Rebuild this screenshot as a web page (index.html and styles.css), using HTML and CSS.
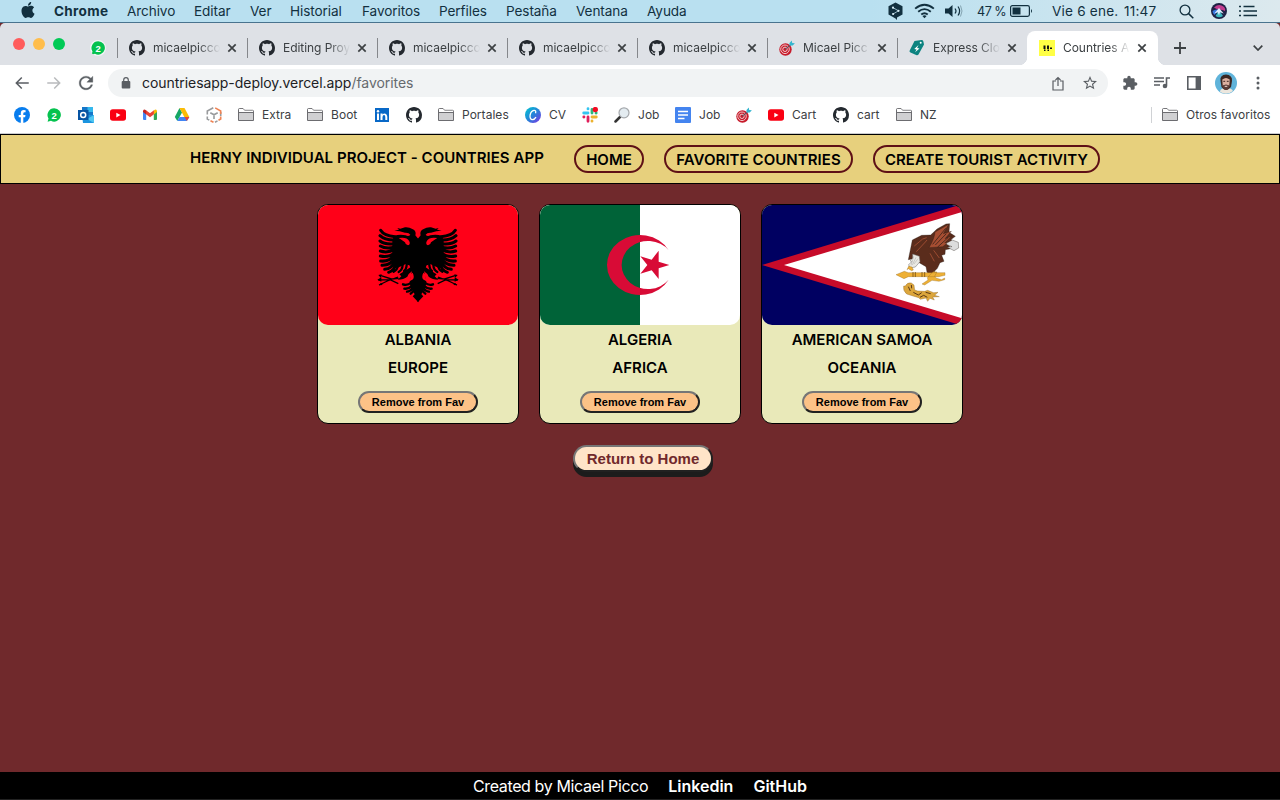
FILE: index.html
```html
<!DOCTYPE html>
<html lang="es">
<head>
<meta charset="utf-8">
<title>Countries App</title>
<link rel="stylesheet" href="styles.css">
</head>
<body>
<svg class="defs" width="0" height="0" aria-hidden="true">
  <symbol id="github" viewBox="0 0 16 16"><path fill="#24292f" d="M8 0C3.58 0 0 3.58 0 8c0 3.54 2.29 6.53 5.47 7.59.4.07.55-.17.55-.38 0-.19-.01-.82-.01-1.49-2.01.37-2.53-.49-2.69-.94-.09-.23-.48-.94-.82-1.13-.28-.15-.68-.52-.01-.53.63-.01 1.08.58 1.23.82.72 1.21 1.87.87 2.33.66.07-.52.28-.87.51-1.07-1.78-.2-3.64-.89-3.64-3.95 0-.87.31-1.59.82-2.15-.08-.2-.36-1.02.08-2.12 0 0 .67-.21 2.2.82.64-.18 1.32-.27 2-.27s1.36.09 2 .27c1.53-1.04 2.2-.82 2.2-.82.44 1.1.16 1.92.08 2.12.51.56.82 1.27.82 2.15 0 3.07-1.87 3.75-3.65 3.95.29.25.54.73.54 1.48 0 1.07-.01 1.93-.01 2.2 0 .21.15.46.55.38A8.01 8.01 0 0 0 16 8c0-4.42-3.58-8-8-8z"/></symbol>
  <symbol id="close" viewBox="0 0 10 10"><path d="M1.3 1.3l7.4 7.4M8.700 1.300L1.300 8.700" stroke="#3c4043" stroke-width="1.7"/></symbol>
  <symbol id="whatsapp" viewBox="0 0 16 16"><path fill="#05c24f" d="M8.200 1.200a6.700 6.700 0 1 1-3.200 12.600L1.600 14.700l.9-3.300A6.700 6.700 0 0 1 8.200 1.200z"/><text x="8.200" y="11.600" class="badge-number">2</text></symbol>
  <symbol id="folder" viewBox="0 0 16 16"><path fill="#d0d0d2" stroke="#6c6c70" d="M.5 13.500v-11q0-.9.900-.9h3.700l1.500 1.700h8q.9 0 .9.900v9.300z"/><path fill="#fff" d="M1 5V2.100h3.900l1.500 1.700H15V5z"/><path stroke="#6c6c70" d="M1 5.500h14"/></symbol>
  <symbol id="youtube" viewBox="0 0 16 16"><rect y="2.300" width="16" height="11.500" rx="2.800" fill="#fa0012"/><path d="M6.300 5.700v4.700l4.200-2.350z" fill="#fff"/></symbol>
  <symbol id="dart" viewBox="0 0 16 16"><circle cx="6.500" cy="9.500" r="6.200" fill="#c71b2b"/><circle cx="6" cy="9.300" r="4.300" fill="none" stroke="#f2d7d7" stroke-width=".9"/><circle cx="6" cy="9.300" r="2.200" fill="none" stroke="#f6dddd" stroke-width=".9"/><path d="M6 9.300l6.500-5" stroke="#4b5968"/><path d="M10.500 5.400V2.900L12.800.5l.4 2.500 2.700.3-2.200 2.300z" fill="#35b6cf"/></symbol>
  <symbol id="eagle-half" viewBox="0 0 600 360" overflow="visible">
    <g transform="translate(-24 -30)">
      <path d="M325 132l-9-11q4-14-9-19-9-6-22-5l-14 4-9-2 5 5-14 3 16 2 16 4q12-1 16 6-5 7-14 2-19-4-35 2l-5 14v60l13 23 26-12 12 3 8 18-7 29q0 20 13 36l13 28z"/>
      <path d="M266 129q24-4 31 8 6 10-3 14-8-1-9-9l-13-9z" fill="#ff0018"/>
      <g fill="none" stroke="#000" stroke-width="9" stroke-linecap="round">
        <path d="M212 106q9 16 43 19M210 122q15 14 45 13M210 138q16 12 45 8M211 153q17 10 44 3M211 168q20 7 44-4M211 183q24 6 44-10M212 198q25 3 43-18M216 211q26 1 40-24M224 223q22-2 33-27M236 232q19-6 24-32"/>
        <path stroke-width="7" d="M251 230q12-6 13-20M266 231q11-6 12-21M282 228q7-4 8-18"/>
        <path stroke-width="7" d="M279 268q12 5 25-5M283 281q12 2 24-9M291 290q9 0 17-10M302 296l9-8"/>
      </g>
      <path d="M311 210q-20 14-43 28l6 6-11 10q18 0 29-9l4-8 17-14z"/>
      <path d="M266 250l-22 2-31-10m-8 13l35-1 25 12m-58 4l25-12 32-12" fill="none" stroke="#000" stroke-width="4"/>
      <path d="M202 254l12-7v13zM205 240l10-2-3 10zM207 271l11-1-5-7z"/>
      <path d="M308 233q-10 6-7 17l-14 12q12-1 22-9 5-8-1-20z" fill="#ff0018"/>
      <path d="M308 304l17-17v35z"/>
    </g>
  </symbol>
</svg>

<div class="menubar">
  <svg class="apple" viewBox="0 0 24 24"><path fill="#12303f" d="M12.152 6.896c-.948 0-2.415-1.078-3.960-1.040-2.040.027-3.910 1.183-4.961 3.014-2.117 3.675-.546 9.103 1.519 12.090 1.013 1.454 2.208 3.090 3.792 3.039 1.520-.065 2.090-.987 3.935-.987 1.831 0 2.350.987 3.960.948 1.637-.026 2.676-1.480 3.676-2.948 1.156-1.688 1.636-3.325 1.662-3.415-.039-.013-3.182-1.221-3.220-4.857-.026-3.040 2.480-4.494 2.597-4.559-1.429-2.090-3.623-2.324-4.390-2.376-2-.156-3.675 1.090-4.610 1.090zM15.530 3.830c.843-1.012 1.400-2.427 1.245-3.830-1.207.052-2.662.805-3.532 1.818-.78.896-1.454 2.338-1.273 3.714 1.338.104 2.715-.688 3.559-1.701"/></svg>
  <b>Chrome</b><span>Archivo</span><span>Editar</span><span>Ver</span><span>Historial</span><span>Favoritos</span><span>Perfiles</span><span>Pestaña</span><span>Ventana</span><span>Ayuda</span>
  <svg class="deepl" viewBox="0 0 16 18"><path fill="#12303f" d="M8 .5L15 4.300v8.300L9.500 15.600V18L8 16.500 1 12.600V4.300z"/><path d="M5.500 5.700l5.500 3.100-5.400 3.200" fill="none" stroke="#bfdfed" stroke-width=".8"/><g fill="#d9eff7"><circle cx="5.500" cy="5.700" r="1.100"/><circle cx="11" cy="8.800" r="1.100"/><circle cx="5.600" cy="12" r="1.100"/></g></svg>
  <svg class="wifi" viewBox="0 0 22 16"><g fill="none" stroke="#12303f" stroke-width="2"><path d="M1.200 5.500q9.800-8.200 19.600 0M4.400 8.700q6.600-5.300 13.200 0M7.600 11.700q3.400-2.700 6.800 0"/></g><path fill="#12303f" d="M8.800 13.300q2.200-1.600 4.400 0L11 15.600z"/></svg>
  <svg class="sound" viewBox="0 0 18 14"><path fill="#12303f" d="M0 4.500h3.500L7.500 1v12l-4-3.500H0z"/><path d="M10 4.500q2 2.500 0 5M13 2.500q3.200 4.500 0 9" fill="none" stroke="#12303f" stroke-width="1.200"/><path d="M15.500 1.500q3 5.500 0 11" fill="none" stroke="#83a3b0"/></svg>
  <span class="battery-text">47 %</span>
  <svg class="battery" viewBox="0 0 23 12"><rect x=".6" y=".6" width="18.800" height="10.800" rx="1.800" fill="none" stroke="#12303f" stroke-width="1.200"/><path fill="#12303f" d="M2.500 2.500h8v7h-8zM21 4q2 2 0 4z"/></svg>
  <span class="clock">Vie 6 ene.</span><span class="clock">11:47</span>
  <svg class="i15" viewBox="0 0 15 15"><circle cx="6" cy="6" r="4.900" fill="none" stroke="#12303f" stroke-width="1.300"/><path d="M9.600 9.600l4.700 4.700" stroke="#12303f" stroke-width="1.500"/></svg>
  <svg class="i16" viewBox="0 0 16 16"><circle cx="8" cy="8" r="8" fill="#1f2145"/><path d="M3 4.500q4-3.500 7.500-2 4.500 1.500 3.500 5.500-4-2-6.500-1z" fill="#c23c8f"/><path d="M1.500 8q3.500-2.500 6.500-1l-4.500 5Q1.500 10.500 1.500 8z" fill="#3676dd"/><path d="M8 7l4 6Q8 15.500 4.500 13z" fill="#3ab6bd"/><path d="M3.300 10.500l4.700-5.500 4.700 5.500-3.700-1.300-1 3.300-1.300-3.300z" fill="#dcecff"/></svg>
  <svg class="list" viewBox="0 0 18 12"><path d="M0 1.500h2M0 6h2M0 10.500h2M4.500 1.500h11M4.500 6h13.500M4.500 10.500H18" stroke="#12303f" stroke-width="1.700"/></svg>
</div>

<div class="tabstrip">
  <div class="window-controls"><i class="red"></i><i class="yellow"></i><i class="green"></i></div>
  <svg class="pinned"><use href="#whatsapp"/></svg>
  <div class="tab"><svg class="i16"><use href="#github"/></svg><span>micaelpicco</span><svg class="x"><use href="#close"/></svg></div>
  <div class="tab"><svg class="i16"><use href="#github"/></svg><span>Editing Proy</span><svg class="x"><use href="#close"/></svg></div>
  <div class="tab"><svg class="i16"><use href="#github"/></svg><span>micaelpicco</span><svg class="x"><use href="#close"/></svg></div>
  <div class="tab"><svg class="i16"><use href="#github"/></svg><span>micaelpicco</span><svg class="x"><use href="#close"/></svg></div>
  <div class="tab"><svg class="i16"><use href="#github"/></svg><span>micaelpicco</span><svg class="x"><use href="#close"/></svg></div>
  <div class="tab"><svg class="i16"><use href="#dart"/></svg><span>Micael Picc</span><svg class="x"><use href="#close"/></svg></div>
  <div class="tab"><svg class="i16" viewBox="0 0 16 16"><path fill="#0c8380" d="M5.500 1L12.500 0q1.500 0 1.800 1.200l.7 3.300-5.500 10q-.7 1-1.800.8L1.500 12.500Q0 12 .7 10.500z"/><circle cx="11.700" cy="2.800" r="1" fill="#fff"/><path fill="#fff" d="M9.500 5L5.300 8.900l2.300.7-1.600 2.600 4.500-3.600-2.400-.7z"/></svg><span>Express Clo</span><svg class="x"><use href="#close"/></svg></div>
  <div class="tab active"><svg class="i16" viewBox="0 0 16 16"><path fill="#ffff45" d="M0 0h16v16H0z"/><path fill="#111" d="M4.500 5.500h2V9h-2zM8 5.500h2V9H8zM5 9.500h1.500V11H5zM8.500 9.500H10V11H8.500zM11 7.500h2V9h-2z"/></svg><span>Countries A</span><svg class="x"><use href="#close"/></svg></div>
  <svg class="plus" viewBox="0 0 12 12"><path d="M6 0v12M0 6h12" stroke="#3c4043" stroke-width="1.800"/></svg>
  <svg class="chevron" viewBox="0 0 10 6"><path d="M.7.7L5 5 9.300.7" fill="none" stroke="#3c4043" stroke-width="1.700"/></svg>
</div>

<div class="toolbar">
  <svg class="tool" viewBox="0 0 24 24"><path fill="#5a5e63" d="M21 11H6.830l5.590-5.590L11 4l-8 8 8 8 1.410-1.410L6.830 13H21z"/></svg>
  <svg class="tool" viewBox="0 0 24 24"><path fill="#b9bbbd" d="M13 4l-1.410 1.410L17.170 11H3v2h14.170l-5.580 5.590L13 20l8-8z"/></svg>
  <svg class="tool" viewBox="0 0 24 24"><path fill="#5a5e63" stroke="#5a5e63" stroke-width=".4" d="M18.500 5.500C16.900 3.900 14.600 2.900 12 2.900c-5 0-9.100 4.100-9.100 9.100s4.100 9.100 9.100 9.100c4.200 0 7.800-2.900 8.800-6.800h-2.300c-.9 2.700-3.500 4.600-6.500 4.600-3.800 0-6.900-3.100-6.900-6.900S8.200 5.100 12 5.100c1.900 0 3.600.8 4.900 2l-3.800 3.800h8V2.900z"/></svg>
  <div class="omnibox">
    <svg class="lock" viewBox="0 0 10 12"><rect x=".7" y="4" width="8.600" height="7.500" rx="1" fill="#5a5e63"/><path d="M2.700 4.500V3a2.300 2.300 0 0 1 4.600 0v1.500" fill="none" stroke="#5a5e63" stroke-width="1.200"/></svg>
    <span class="url">countriesapp-deploy.vercel.app<em>/favorites</em></span>
    <svg class="share" viewBox="0 0 12 15"><path d="M4 5H1v9h10V5H8M6 10V1.500M3.500 4L6 1.500 8.500 4" fill="none" stroke="#5a5e63" stroke-width="1.200"/></svg>
    <svg class="star" viewBox="2 2 20 20"><path fill="#5a5e63" d="M22 9.240l-7.190-.62L12 2 9.190 8.630 2 9.240l5.460 4.730L5.820 21 12 17.270 18.180 21l-1.630-7.030L22 9.240zM12 15.400l-3.760 2.270 1-4.280-3.320-2.880 4.380-.38L12 6.100l1.710 4.040 4.380.38-3.320 2.880 1 4.280L12 15.400z"/></svg>
  </div>
  <svg class="ext" viewBox="0 0 24 24"><path fill="#5a5e63" d="M20.500 11H19V7c0-1.100-.9-2-2-2h-4V3.500C13 2.120 11.880 1 10.500 1S8 2.120 8 3.500V5H4c-1.100 0-1.990.9-1.990 2v3.800H3.500c1.490 0 2.700 1.210 2.700 2.700s-1.210 2.700-2.700 2.700H2V20c0 1.100.9 2 2 2h3.800v-1.500c0-1.490 1.210-2.700 2.700-2.700 1.490 0 2.700 1.210 2.700 2.700V22H17c1.100 0 2-.9 2-2v-4h1.500c1.380 0 2.500-1.120 2.500-2.500S21.880 11 20.500 11z"/></svg>
  <svg class="music" viewBox="0 0 16 14"><path d="M0 2h10M0 5.500h10M0 9h6" stroke="#5a5e63" stroke-width="1.400"/><path d="M16 2h-3.500v7.500" fill="none" stroke="#5a5e63" stroke-width="1.600"/><circle cx="11" cy="10" r="2.300" fill="#5a5e63"/></svg>
  <svg class="panel" viewBox="0 0 14 14"><path fill="#5a5e63" d="M0 0h14v14H0zM1.600 1.600v10.800h7V1.600z" fill-rule="evenodd"/></svg>
  <svg class="avatar" viewBox="0 0 22 22"><circle cx="11" cy="11" r="11" fill="#5fb3da"/><path fill="#ece6dd" d="M5 20q0-4 6-4 6 0 7 3-6 5-13 1z"/><path fill="#3b2723" d="M5.500 9q-1-6 5.500-6.500 6.500.5 6 6.500l-1 6q-5 6-9.500 0z"/><path fill="#dcb0a0" d="M7.300 7.500q3.700-3 7.400 0l-.4 6.500q-3.300 4-6.600 0z"/><path fill="#5c3c36" d="M7.300 12.500q1.200 1 2 .5 1.700-.8 3.400 0 .8.500 2-.5-.2 5.500-3.700 5.500t-3.700-5.500z"/><path d="M8.300 9.300h1.900m1.600 0h1.900" stroke="#38211d"/><path d="M9.700 14.300h2.600" stroke="#f3dcd5"/></svg>
  <svg class="dots" viewBox="0 0 4 14"><g fill="#5a5e63"><circle cx="2" cy="2" r="1.500"/><circle cx="2" cy="7" r="1.500"/><circle cx="2" cy="12" r="1.500"/></g></svg>
</div>

<div class="bookmarks">
  <div><svg class="i16" viewBox="0 0 16 16"><circle cx="8" cy="8" r="8" fill="#087dee"/><path fill="#fff" d="M6.800 16v-5.700H4.700V8h2.100V6.200Q6.800 3 9.800 3l1.800.2v2h-1Q9.300 5.200 9.300 6.600V8h2.200l-.4 2.300H9.300V16z"/></svg></div>
  <div><svg class="i16"><use href="#whatsapp"/></svg></div>
  <div><svg class="i16" viewBox="0 0 16 16"><path fill="#1577c9" d="M4 0h11v10H4z"/><path fill="#35b8ed" d="M9.500 0H15v5H9.500z"/><path fill="#1b94df" d="M4 8h12v8H5z"/><path fill="#50c7f1" d="M16 8v8L9 12z"/><path fill="#0754a3" d="M0 3h10.500v10H0z"/><circle cx="5.200" cy="8" r="2.500" fill="none" stroke="#fff" stroke-width="1.500"/></svg></div>
  <div><svg class="i16"><use href="#youtube"/></svg></div>
  <div><svg class="i16" viewBox="0 0 16 16"><path fill="#4285f4" d="M1 4l3.200 2.300V13H2q-1 0-1-1z"/><path fill="#34a853" d="M15 4l-3.200 2.300V13H14q1 0 1-1z"/><path fill="#ea4335" d="M4 3.300l4 3 4-3v4l-4 3-4-3z"/><path fill="#c5221f" d="M1 4.200Q1.300 1.500 4.200 3.400v4L1 5z"/><path fill="#fbbc04" d="M15 4.200q-.3-2.700-3.200-.8v4L15 5z"/></svg></div>
  <div><svg class="i16" viewBox="0 0 16 16"><path fill="#16a765" d="M5.500 1L8 5.500 3.300 14 .8 10z"/><path fill="#fbbc05" d="M5.500 1h5L15.300 10h-5z"/><path fill="#4285f4" d="M5.500 10h9.800l-2.500 4H3.300z"/><path fill="#ea4335" d="M10.500 10h4.800l-2.400 4z"/></svg></div>
  <div><svg class="i16" viewBox="0 0 16 16"><g fill="none" stroke-width="1.600"><path stroke="#999b9d" d="M7.300.8L1.300 4v3.500M1.300 9.500V12l2 1.100M14.700 9V5M9 15.200l2.500-1.300M4.300 5.800L8 7.800l3.700-2M8 7.800V12"/><path stroke="#ef8354" d="M9.200.9l5.500 3.100v3M14.700 9.500V12l-2.200 1.300M4.500 13.700l3 1.600"/></g></svg></div>
  <div><svg class="i16"><use href="#folder"/></svg>Extra</div>
  <div><svg class="i16"><use href="#folder"/></svg>Boot</div>
  <div><svg class="i16" viewBox="0 0 16 16"><path fill="#0868c7" d="M1 1h14v14H1z"/><path fill="#fff" d="M3 6.500h2V13H3zM6.500 6.500h2v1q2-2 4 0 .8 1 .8 2.500v3h-2v-3Q11.300 8 10 8T8.500 10v3h-2z"/><circle cx="4" cy="4.200" r="1.200" fill="#fff"/></svg></div>
  <div><svg class="i16"><use href="#github"/></svg></div>
  <div><svg class="i16"><use href="#folder"/></svg>Portales</div>
  <div><svg class="i16" viewBox="0 0 16 16"><defs><linearGradient id="cv" x2="1" y2="1"><stop stop-color="#00c9d1"/><stop offset=".5" stop-color="#2583d8"/><stop offset="1" stop-color="#8031e6"/></linearGradient></defs><circle cx="8" cy="8" r="8" fill="url(#cv)"/><path d="M10.500 6.200Q11.500 3.300 9 3.400 6 4 5.100 8q-.6 4.500 2.500 4.600 2 0 3.400-2.400" fill="none" stroke="#fff" stroke-width="1.300"/></svg>CV</div>
  <div><svg class="i16" viewBox="0 0 16 16"><g stroke-width="2.800" stroke-linecap="round"><path stroke="#36c5f0" d="M6 1.700v.2M1.700 6H6"/><path stroke="#2eb67d" d="M10 2.500V6M14 6h.2"/><path stroke="#e01e5a" d="M1.800 10h.2M6 10v4.300"/><path stroke="#ecb22e" d="M10 10h4.300M10 14v.2"/></g><circle cx="13.300" cy="2.600" r="2.700" fill="#f40b22"/></svg></div>
  <div><svg class="i16" viewBox="0 0 16 16"><path d="M6 10L1.500 14.500" stroke="#333" stroke-width="2.500" stroke-linecap="round"/><circle cx="10" cy="5.800" r="5" fill="#e4ecf1" stroke="#a5a8ac" stroke-width="1.200"/></svg>Job</div>
  <div><svg class="i16" viewBox="0 0 16 16"><rect width="16" height="16" rx="1" fill="#4484ef"/><path d="M3 4.500h10M3 8h10M3 11.500h6.500" stroke="#fff" stroke-width="1.700"/></svg>Job</div>
  <div><svg class="i16"><use href="#dart"/></svg></div>
  <div><svg class="i16"><use href="#youtube"/></svg>Cart</div>
  <div><svg class="i16"><use href="#github"/></svg>cart</div>
  <div><svg class="i16"><use href="#folder"/></svg>NZ</div>
  <div class="other"><svg class="i16"><use href="#folder"/></svg>Otros favoritos</div>
</div>

<div class="page">
  <header>
    <h1>HERNY INDIVIDUAL PROJECT - COUNTRIES APP</h1>
    <nav><a class="home">HOME</a><a class="favorites">FAVORITE COUNTRIES</a><a class="create">CREATE TOURIST ACTIVITY</a></nav>
  </header>
  <main>
    <div class="cards">
      <article>
        <svg class="flag" viewBox="0 0 600 360"><path fill="#ff0018" d="M0 0h600v360H0z"/><use href="#eagle-half" width="600" height="360"/><g transform="matrix(-1 0 0 1 600 0)"><use href="#eagle-half" width="600" height="360"/></g></svg>
        <h2>ALBANIA</h2><h2>EUROPE</h2><button>Remove from Fav</button>
      </article>
      <article>
        <svg class="flag" viewBox="0 0 600 360"><path fill="#fff" d="M0 0h600v360H0z"/><path fill="#006338" d="M0 0h300v360H0z"/><path fill="#d80b36" d="M386 135.500A99 90 0 1 0 386 224.500A79 72 0 1 1 386 135.500zM388 180l-32 10v32l-21-26-34 10 21-26-21-26 34 10 21-27v33z"/></svg>
        <h2>ALGERIA</h2><h2>AFRICA</h2><button>Remove from Fav</button>
      </article>
      <article>
        <svg class="flag" viewBox="0 0 600 360"><path fill="#000061" d="M0 0h600v360H0z"/><path fill="#c70b29" d="M0 180L582 3 600 0v360l-18-4z"/><path fill="#fff" d="M66 180L600 21v319z"/>
          <g transform="translate(-36 -30)" stroke="#201713" stroke-width="1">
            <path fill="#5a2c1c" d="M483 155l4-20 28-14 27-1 19-18 27-15 11-1-2 26 19 12-12 9 4 12-12 5 6 11-16 3-1 14-10 3 7 18-12 4-8 17-8 8-6 16-17-12-3-17-24-14-15-10-14 3z"/>
            <path fill="#a64e32" d="M537 158q17-28 18-47l41-23-16 28 24-7-19 22 20-8-21 21 14-4-20 15z"/>
            <path fill="none" stroke="#9b4b31" stroke-width="3" d="M493 153l25-21 12-4M499 170l27-29 5-6M540 175l13 24M551 166l17 23"/>
            <path fill="none" stroke-width="2" d="M548 148l39-48M556 150l33-34M563 156l31-28"/>
            <path fill="#ddd" d="M589 145l18-10 18 7 1 17-14 8-21-11 15-1-15-6z"/>
            <path fill="#e9e8e2" stroke="#666" stroke-width="1.500" d="M488 177l20 7 2 16-14 16-17 3-3-10 9-9-5-3 8-7z"/>
            <path fill="none" stroke="#888" d="M491 184l-8 27M498 187l-11 23M504 191l-12 16"/>
            <path fill="#eeb035" stroke="#8e651b" d="M476 214l10 2 4 9-5 2-10-6-4 3zM438 239l25-10 12 4h110v8l-19 4H475l-13 6zM532 248l17-18 12 1-7 12 4 6 17 5 9-5v5l-17 5-21-3-22 14-8-3 18-12z"/>
            <path fill="none" stroke="#785316" stroke-width="2.500" d="M489 231v15m7-15v15m20-15v15m8-15v15"/>
            <path fill="#dca63c" stroke="#80591e" d="M466 273q6-12 18-9l8 6 2 15 9 3 21 1 9-3 18 7 13-1-10 9 14 4-20 1 5 9-13-5-7 9-5-10-17 4-5-5-17-5-19-6q-12-10-9-24z"/>
            <path fill="none" stroke="#593917" stroke-width="3" d="M475 275l6 13M484 270l1 10M490 292l15 8 10-7m-5 14l11-6 11 6m-5-15l15 4"/>
          </g></svg>
        <h2>AMERICAN SAMOA</h2><h2>OCEANIA</h2><button>Remove from Fav</button>
      </article>
    </div>
    <button class="return">Return to Home</button>
  </main>
  <footer><span>Created by Micael Picco</span><b>Linkedin</b><b>GitHub</b></footer>
</div>
</body>
</html>
```
FILE: styles.css
```css
* { box-sizing: border-box; }
body { margin: 0; width: 1280px; height: 800px; overflow: hidden; display: flex; flex-direction: column; font-family: Inter, "Liberation Sans", sans-serif; background: #70292c; }
svg { display: block; flex: none; }
.defs { position: absolute; }
.i16 { width: 16px; height: 16px; }
.i15 { width: 15px; height: 15px; }
.badge-number { font: bold 9.5px "Liberation Sans", sans-serif; fill: #fff; text-anchor: middle; }

.menubar { height: 23px; flex: none; display: grid; grid-template-columns: 34px 73px 67px 56px 40px 72px 77px 67px 70px 71px 240px 27px 31px 32px 33px 42px 72px 55px 32px 28px 20px; padding-left: 20px; align-items: center; background: linear-gradient(90deg, #b9e0f0 68%, #dce9ee); border-bottom: 1px solid #49738e; color: #12303f; font-size: 13.6px; letter-spacing: -.1px; white-space: nowrap; }
.menubar b { letter-spacing: .3px; }
.menubar .clock { letter-spacing: .2px; }
.apple { width: 16px; height: 16px; margin-top: -2px; }
.deepl { width: 17px; height: 18px; }
.wifi { width: 21px; height: 16px; }
.sound { width: 18px; height: 14px; }
.battery { width: 23px; height: 12px; }
.menubar .battery-text { font-size: 12.6px; letter-spacing: -.5px; }
.list { width: 18px; height: 12px; }

.tabstrip { height: 42px; flex: none; display: flex; align-items: center; background: #dee1e6; border-radius: 5px 5px 0 0; padding: 8px 0 0 13px; }
.window-controls { display: flex; gap: 8px; width: 77px; margin-top: -9px; }
.window-controls i { width: 12px; height: 12px; border-radius: 50%; }
.red { background: #ff5c5c; }
.yellow { background: #ffbd4c; }
.green { background: #00ca56; }
.pinned { width: 16px; height: 16px; margin-right: 11px; background: #f2f4f5; border-radius: 50%; }
.tab { height: 34px; width: 130px; flex: none; display: flex; align-items: center; padding-left: 12px; position: relative; }
.tab::before { content: ""; width: 1px; height: 20px; background: #85878b; position: absolute; left: 0; top: 7px; }
.tab span { width: 67px; margin: 0 7px 0 8px; overflow: hidden; white-space: nowrap; font-size: 12px; letter-spacing: -.05px; line-height: 18px; color: #3c4043; -webkit-mask-image: linear-gradient(90deg, #000 68%, transparent); mask-image: linear-gradient(90deg, #000 68%, transparent); }
.x { width: 10px; height: 10px; }
.tab.active { width: 131px; background: #fff; border-radius: 8px 8px 0 0; }
.tab.active::before { display: none; }
.tab.active::after { content: ""; position: absolute; left: -8px; right: -8px; bottom: 0; height: 8px; background: radial-gradient(circle at 0 0, transparent 8px, #fff 8.5px) left / 8px 8px no-repeat, radial-gradient(circle at 100% 0, transparent 8px, #fff 8.5px) right / 8px 8px no-repeat; }
.plus { width: 12px; height: 12px; margin: 0 67px 0 16px; }
.chevron { width: 10px; height: 6px; }

.toolbar { height: 36px; flex: none; background: #fff; display: flex; align-items: center; padding-left: 13px; }
.tool { width: 18px; height: 18px; margin-right: 14px; }
.omnibox { width: 1000px; height: 28px; flex: none; margin-left: -1px; background: #f1f3f4; border-radius: 14px; display: flex; align-items: center; padding-left: 13px; }
.lock { width: 10px; height: 12px; }
.url { width: 908px; margin: 0 3px 0 11px; font-size: 14px; line-height: 20px; color: #202124; letter-spacing: -.05px; }
.url em { font-style: normal; color: #666a6e; }
.share { width: 12px; height: 15px; margin: 0 19px 0 -1px; }
.star { width: 14px; height: 14px; }
.ext { width: 16px; height: 16px; margin-left: 14px; }
.music { width: 16px; height: 14px; margin-left: 16px; }
.panel { width: 14px; height: 14px; margin-left: 17px; }
.avatar { width: 22px; height: 22px; margin-left: 14px; }
.dots { width: 4px; height: 14px; margin-left: 19px; }

.bookmarks { height: 33px; flex: none; background: #fff; border-bottom: 1px solid #cbcccf; display: grid; grid-template-columns: repeat(7, 32px) 69px 67px 32px 32px 87px 57px 32px 61px 61px 32px 65px 63px 255px 118px; padding: 0 0 4px 14px; align-items: center; font-size: 12px; line-height: 16px; letter-spacing: .04px; color: #3c4043; }
.bookmarks div { height: 16px; display: flex; align-items: flex-start; gap: 8px; white-space: nowrap; }
.bookmarks .other { border-left: 1px solid #d0d2d5; padding-left: 10px; }

.page { flex: 1; display: flex; flex-direction: column; background: #70292c; }
header { height: 50px; flex: none; display: flex; background: #e7d07d; border: 1px solid #000; padding: 10px 0 0 189px; color: #000; }
h1 { width: 354px; margin: 0 30px 0 0; font-size: 15px; font-weight: 600; letter-spacing: .04px; line-height: 26px; white-space: nowrap; }
nav { display: flex; gap: 20px; }
nav a { height: 28px; border: 2px solid #5e1016; border-radius: 14px; text-align: center; font-size: 15px; font-weight: 600; line-height: 25px; white-space: nowrap; }
.home { width: 70px; }
.favorites { width: 189px; letter-spacing: .06px; }
.create { width: 227px; }
main { flex: 1; display: flex; flex-direction: column; align-items: center; padding-top: 20px; }
.cards { display: flex; gap: 20px; }
article { width: 202px; height: 220px; border: 1px solid #000; border-radius: 11px; background: #e9e9b9; display: flex; flex-direction: column; align-items: center; }
.flag { width: 200px; height: 120px; border-radius: 10px; margin-bottom: 1px; }
h2 { margin: 0; font-size: 15px; font-weight: 600; line-height: 28px; color: #000; }
button { width: 120px; height: 22px; flex: none; margin-top: 9px; padding: 0; background: #fcc287; border: 2px solid; border-color: #767676 #212121 #212121 #767676; border-radius: 11px; color: #000; font: bold 11px "Liberation Sans", sans-serif; white-space: nowrap; }
.return { width: 140px; height: 27px; margin: 21px 0 0 6px; border-radius: 14px; background: #ffe4c8; color: #70292c; font-size: 15px; letter-spacing: 0; box-shadow: 0 5px #1c1c1c; }
footer { height: 28px; flex: none; background: #000; color: #fff; display: flex; justify-content: center; gap: 20px; font-size: 16px; line-height: 28px; border-bottom: 1px solid #222; }
footer span { letter-spacing: -.38px; }
footer b { font-weight: 600; }
```
